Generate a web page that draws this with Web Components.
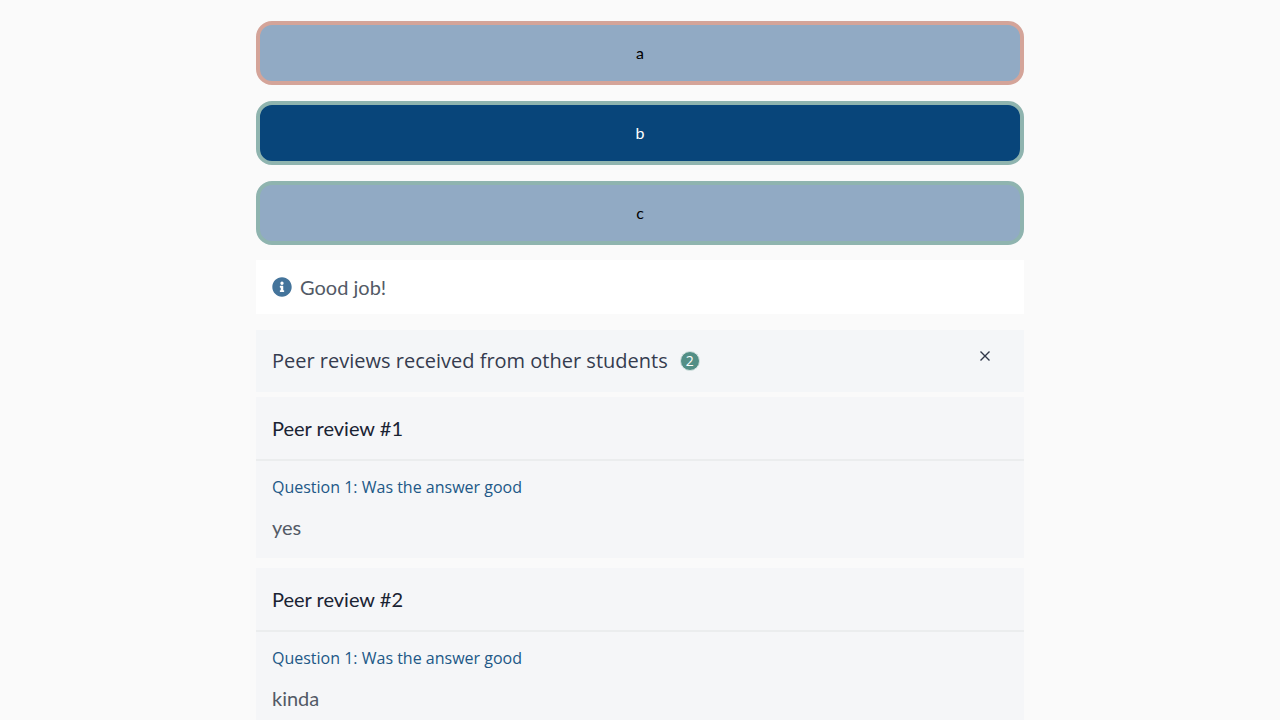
<!DOCTYPE html>
<html lang="en">
<head>
<meta charset="utf-8">
<meta name="viewport" content="width=device-width, initial-scale=1">
<title>Exercise feedback</title>
<style>
  body { margin: 0; background: #fafafa; font-family: Lato, sans-serif; }
</style>
</head>
<body>
<exercise-page>
  <option-list slot="options">
    <answer-option result="wrong">a</answer-option>
    <answer-option result="right" selected>b</answer-option>
    <answer-option result="right">c</answer-option>
  </option-list>
  <feedback-message>Good job!</feedback-message>
  <review-accordion count="2">
    <span slot="title">Peer reviews received from other students</span>
    <peer-review number="1">
      <review-answer question="Question 1: Was the answer good">yes</review-answer>
    </peer-review>
    <peer-review number="2">
      <review-answer question="Question 1: Was the answer good">kinda</review-answer>
    </peer-review>
  </review-accordion>
</exercise-page>
<script>
const define = (name, render) => customElements.define(name, class extends HTMLElement {
  constructor() {
    super();
    this.attachShadow({ mode: 'open' }).innerHTML = render(this);
  }
});

define('exercise-page', () => `
  <style>
    :host { display: block; }
    main { width: 100%; max-width: 768px; margin: 0 auto; padding: 21px 0; }
    .feedback { display: flex; flex-direction: column; gap: 16px; margin-top: 15px; }
  </style>
  <main><slot name="options"></slot><div class="feedback"><slot></slot></div></main>`);

define('option-list', () => `
  <style>:host { display: flex; flex-direction: column; gap: 16px; }</style>
  <slot></slot>`);

define('answer-option', el => `
  <style>
    :host { display: block; --edge: #8fb4af; }
    :host([result="wrong"]) { --edge: #d4a499; }
    button {
      box-sizing: border-box; display: block; width: 100%; padding: 16px; margin: 0;
      border: 4px solid var(--edge); border-radius: 16px;
      background: #91aac4; color: #000; font: 16px/24px Lato, sans-serif; text-align: center;
    }
    :host([selected]) button { background: #08457a; color: #fff; }
  </style>
  <button type="button" aria-pressed="${el.hasAttribute('selected')}"><slot></slot></button>`);

define('feedback-message', () => `
  <style>
    :host { display: flex; align-items: center; gap: 8px; padding: 11px 16px; background: #fff; color: #535a66; font-size: 20px; line-height: 32px; }
    svg { display: block; width: 20px; height: 20px; fill: #44749b; }
  </style>
  <svg viewBox="0 0 512 512" aria-hidden="true"><path d="M256 8C119 8 8 119 8 256s111 248 248 248 248-111 248-248S393 8 256 8zm0 110a42 42 0 1 1 0 84 42 42 0 0 1 0-84zm56 254c0 6.600-5.400 12-12 12h-88c-6.600 0-12-5.400-12-12v-24c0-6.600 5.400-12 12-12h12v-64h-12c-6.600 0-12-5.400-12-12v-24c0-6.600 5.400-12 12-12h64c6.600 0 12 5.400 12 12v100h12c6.600 0 12 5.400 12 12v24z"/></svg>
  <span><slot></slot></span>`);

define('review-accordion', el => `
  <style>
    :host { display: block; }
    header { display: flex; align-items: center; gap: 12px; padding: 16px; background: #f4f6f8; color: #353c4f; }
    h2 { margin: 0; font: 500 20px/30px "Open Sans", sans-serif; }
    .count { box-sizing: border-box; width: 20px; height: 20px; border: 1px solid #d5e3e1; border-radius: 50%; background: #538f86; color: #fff; font: 14px/18px "Open Sans", sans-serif; text-align: center; }
    button { align-self: flex-start; margin: 0 16px 0 auto; padding: 3px 0; border: 0; background: none; color: #303749; }
    svg { display: block; width: 14px; height: 14px; }
    .reviews { display: flex; flex-direction: column; gap: 10px; margin-top: 5px; }
  </style>
  <section>
    <header>
      <h2><slot name="title"></slot></h2>
      <span class="count">${el.getAttribute('count')}</span>
      <button type="button" aria-label="Close"><svg viewBox="0 0 14 14" fill="none" stroke="currentColor" stroke-width="1.4"><path d="M2.500 2.500l9 9M11.500 2.500l-9 9"/></svg></button>
    </header>
    <div class="reviews"><slot></slot></div>
  </section>`);

define('peer-review', el => `
  <style>
    :host { display: block; background: #f5f6f8; }
    h3 { margin: 0; padding: 16px; border-bottom: 2px solid #ebedee; color: #1a2333; font: 20px/30px Lato, sans-serif; }
    .body { padding: 16px 16px 13px; }
  </style>
  <article>
    <h3>Peer review #${el.getAttribute('number')}</h3>
    <div class="body"><slot></slot></div>
  </article>`);

define('review-answer', el => `
  <style>
    :host { display: block; }
    h4 { margin: 0 0 12px; color: #215887; font: 500 16px/20px "Open Sans", sans-serif; }
    p { margin: 0; color: #535a66; font: 20px/36px Lato, sans-serif; }
  </style>
  <h4>${el.getAttribute('question')}</h4>
  <p><slot></slot></p>`);
</script>
</body>
</html>
